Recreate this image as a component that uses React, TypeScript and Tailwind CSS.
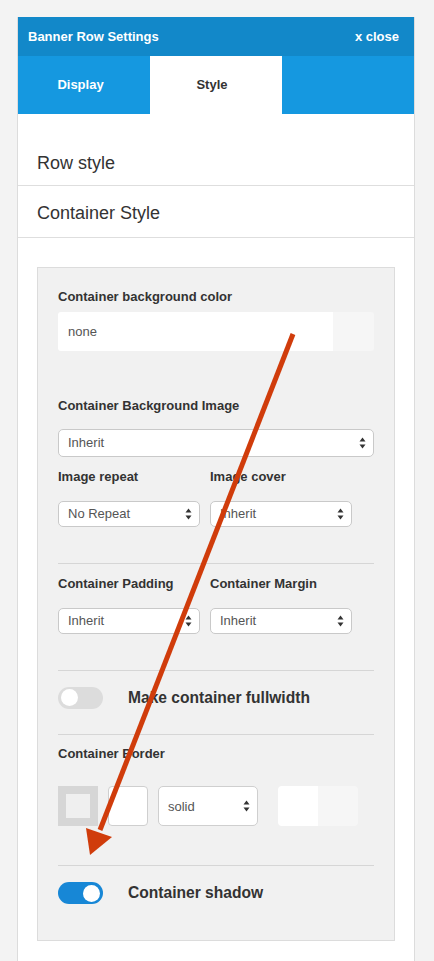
import React from 'react';

const font = { fontFamily: '"Liberation Sans", Arial, sans-serif' };

function SelectArrows() {
  return (
    <svg width="7" height="12" viewBox="0 0 7 12" className="shrink-0">
      <path d="M3.5 0.5 L6.5 4.5 L0.5 4.5 Z" fill="#333" />
      <path d="M3.5 11.5 L6.5 7.5 L0.5 7.5 Z" fill="#333" />
    </svg>
  );
}

function Select({ value, className }: { value: string; className: string }) {
  return (
    <div
      className={`flex items-center justify-between bg-white border border-[#c9c9c9] rounded-[5px] pl-[9px] pr-[7px] text-[13px] text-[#555] ${className}`}
    >
      <span>{value}</span>
      <SelectArrows />
    </div>
  );
}

function Label({ children }: { children: React.ReactNode }) {
  return <div className="text-[13px] leading-[16px] font-bold text-[#333]">{children}</div>;
}

function Toggle({ on }: { on: boolean }) {
  return (
    <div
      className={`w-[45px] h-[22px] rounded-full flex items-center px-[3px] ${
        on ? 'bg-[#1787d6] justify-end' : 'bg-[#dcdcdc] justify-start'
      }`}
    >
      <div className="w-[17px] h-[17px] rounded-full bg-white" />
    </div>
  );
}

export default function App() {
  return (
    <div className="relative min-h-screen bg-[#f3f3f3] pt-[17px] flex flex-col" style={font}>
      <div className="ml-[17px] w-[398px] flex-1 bg-white border-x border-[#dcdcdc]">
        {/* Header */}
        <div className="h-[39px] bg-[#1288c9] flex items-center justify-between pl-[10px] pr-[15px] text-white text-[13px] font-bold">
          <span>Banner Row Settings</span>
          <span>x close</span>
        </div>

        {/* Tabs */}
        <div className="h-[58px] grid grid-cols-[132px_132px_132px] bg-[#1598e0] text-[13px] font-bold">
          <div className="flex items-center justify-center pr-[7px] text-white">Display</div>
          <div className="flex items-center justify-center pr-[8px] bg-white text-[#333]">Style</div>
          <div />
        </div>

        {/* Sections */}
        <div className="h-[72px] flex items-end pb-[11px] pl-[19px] border-b border-[#dedede] text-[18px] leading-[22px] text-[#333]">
          Row style
        </div>
        <div className="h-[52px] flex items-center pt-[2px] pl-[19px] border-b border-[#dedede] text-[18px] leading-[22px] text-[#333]">
          Container Style
        </div>

        {/* Inner settings box */}
        <div className="mt-[29px] ml-[19px] w-[358px] bg-[#f1f1f1] border border-[#dcdcdc] px-[20px] pt-[21px] pb-[35px]">
          <Label>Container background color</Label>
          <div className="mt-[7px] h-[39px] flex rounded-[3px] overflow-hidden">
            <div className="flex-1 bg-white flex items-center pl-[10px] text-[13px] text-[#555]">none</div>
            <div className="w-[41px] bg-[#f6f6f6]" />
          </div>

          <div className="mt-[47px]">
            <Label>Container Background Image</Label>
          </div>
          <Select value="Inherit" className="mt-[15px] h-[28px] w-full" />

          <div className="mt-[12px] grid grid-cols-[142px_142px] gap-x-[10px]">
            <Label>Image repeat</Label>
            <Label>Image cover</Label>
            <Select value="No Repeat" className="mt-[16px] h-[26px]" />
            <Select value="Inherit" className="mt-[16px] h-[26px]" />
          </div>

          <div className="mt-[36px] border-t border-[#d6d6d6]" />

          <div className="mt-[12px] grid grid-cols-[142px_142px] gap-x-[10px]">
            <Label>Container Padding</Label>
            <Label>Container Margin</Label>
            <Select value="Inherit" className="mt-[16px] h-[26px]" />
            <Select value="Inherit" className="mt-[16px] h-[26px]" />
          </div>

          <div className="mt-[36px] border-t border-[#d6d6d6]" />

          <div className="mt-[15px] flex items-center gap-[25px]">
            <Toggle on={false} />
            <span className="text-[15.6px] font-bold text-[#333]">Make container fullwidth</span>
          </div>

          <div className="mt-[25px] border-t border-[#d6d6d6]" />

          <div className="mt-[11px]">
            <Label>Container Border</Label>
          </div>
          <div className="mt-[24px] flex items-center h-[40px]">
            <div className="w-[40px] h-[40px] bg-[#d6d6d6] flex items-center justify-center">
              <div className="w-[24px] h-[24px] bg-[#efefef]" />
            </div>
            <div className="ml-[10px] w-[40px] h-[40px] bg-white border border-[#cfcfcf] rounded-[4px]" />
            <div className="ml-[10px] w-[100px] h-[40px] flex items-center justify-between bg-white border border-[#cfcfcf] rounded-[5px] pl-[9px] pr-[7px] text-[13px] text-[#555]">
              <span>solid</span>
              <SelectArrows />
            </div>
            <div className="ml-[20px] w-[80px] h-[40px] flex rounded-[4px] overflow-hidden">
              <div className="w-[40px] bg-white" />
              <div className="w-[40px] bg-[#f6f6f6]" />
            </div>
          </div>

          <div className="mt-[39px] border-t border-[#d6d6d6]" />

          <div className="mt-[15px] flex items-center gap-[25px]">
            <Toggle on={true} />
            <span className="text-[15.6px] font-bold text-[#333]">Container shadow</span>
          </div>
        </div>
      </div>

      {/* Annotation arrow overlay */}
      <svg
        className="absolute left-0 top-0 pointer-events-none"
        width="434"
        height="961"
        viewBox="0 0 434 961"
      >
        <line x1="293" y1="334" x2="100" y2="830" stroke="#d03c0b" strokeWidth="5" />
        <polygon points="90,855 86,828 112,837" fill="#d03c0b" />
      </svg>
    </div>
  );
}
